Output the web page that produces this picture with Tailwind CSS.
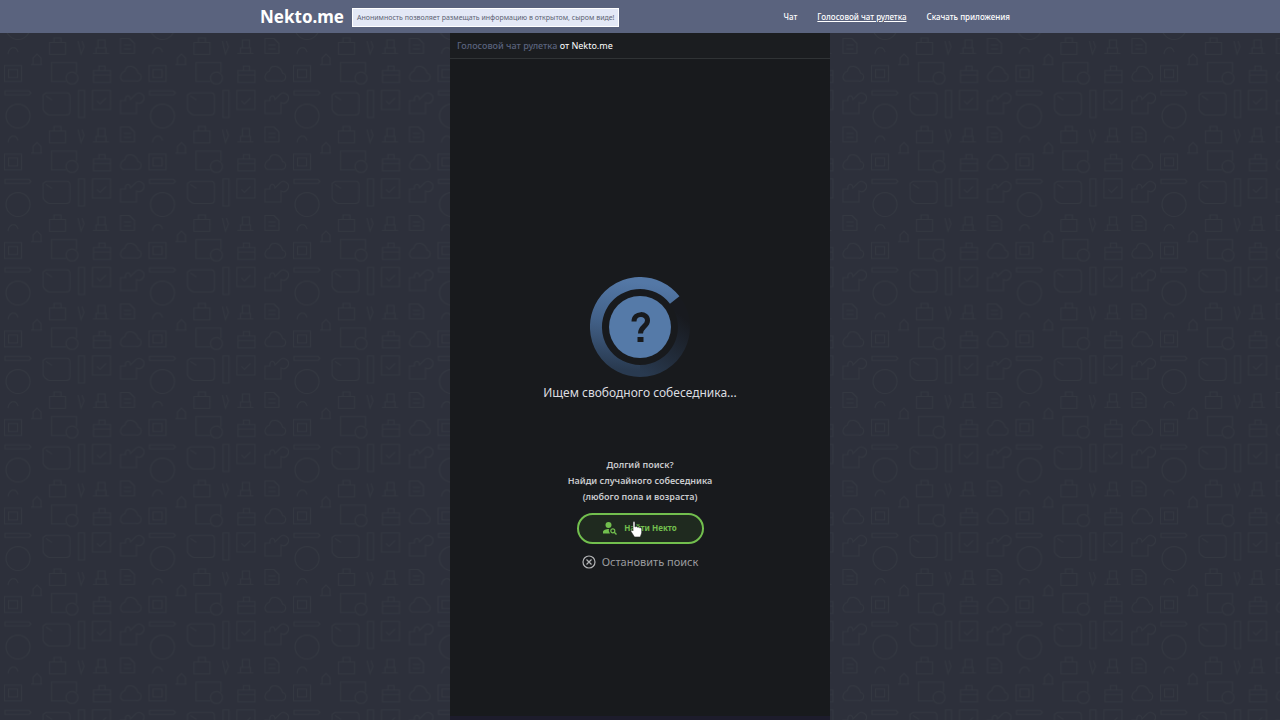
<!DOCTYPE html>
<html lang="ru">
<head>
  <meta charset="UTF-8" />
  <meta name="viewport" content="width=device-width, initial-scale=1.0" />
  <title>Голосовой чат рулетка</title>
  <script src="https://cdn.jsdelivr.net/npm/@tailwindcss/browser@4"></script>
</head>
<body class="relative flex min-h-screen flex-col bg-[#2d303b] font-['Noto_Sans',sans-serif] text-white">
  <!-- doodle wallpaper -->
  <svg class="absolute inset-0 h-full w-full" aria-hidden="true">
    <defs>
      <pattern id="doodles" x="0" y="33" width="144.500" height="88.500" patternUnits="userSpaceOnUse">
        <g fill="none" stroke="#343841" stroke-width="1">
          <path d="M8 21c1-7 8-9 10-2M5 58h24l2 2-2 2H5z" />
          <path d="M49.500 9.500h16v12h-16zM54 9V5h7v4M78 8l3 13 3-7-2-6" />
          <path d="M93 20.500h16M96 20v-5h10v5M98 15v-8h7v8" />
          <path d="M120.500 5.500h9l5 5v10h-14zM124 12h7M124 16h7" />
          <path d="M31 31.500h11M33 31v-6l4-4 4 4v6" />
          <path d="M4.500 32.500h17v16h-17zM8.500 36.500h9v8h-9z" />
          <path d="M66 48.500H51.500v-19h25v10" /><circle cx="72" cy="45" r="6" />
          <path d="M93.500 37.500h17v12h-17zM93 42h17M99 37v-4h6v4" />
          <path d="M123 48h13a4 4 0 0 0 2-8c-2-8-12-9-13-2-5 2-6 8-2 10z" />
          <path d="M46 60h21q3 0 3 4v14q0 4-4 4H49q-5-2-6-6V62zM46 63l6 4" />
          <path d="M78.500 57.500h6v27h-6z" />
          <path d="M92.500 57.500h18v19h-18zM97 68l3 3 6-6" />
          <path d="M120.500 80.500v-13h5c-1-6 5-6 5-1l5-5a5 5 0 1 1 1 8v11z" />
          <circle cx="18" cy="83" r="12" /><circle cx="18" cy="-5.500" r="12" />
        </g>
      </pattern>
    </defs>
    <rect width="100%" height="100%" fill="url(#doodles)" />
  </svg>

  <header class="relative bg-[#5a637e]">
    <div class="mx-auto flex h-[33px] max-w-[760px] items-center justify-between pr-[10px]">
      <div class="flex items-center gap-2">
        <a href="#" class="text-[17px] leading-[32px] font-bold">Nekto.me</a>
        <p class="mt-px h-[19px] border border-white bg-[#e3e8f6] px-[4px] text-[7px] leading-[17px] whitespace-nowrap text-[#5c6272]">Анонимность позволяет размещать информацию в открытом, сыром виде!</p>
      </div>
      <nav class="flex gap-5 text-[8px] font-medium whitespace-nowrap">
        <a href="#">Чат</a>
        <a href="#" class="underline">Голосовой чат рулетка</a>
        <a href="#">Скачать приложения</a>
      </nav>
    </div>
  </header>

  <main class="relative mx-auto flex w-full max-w-[380px] grow flex-col bg-[#181a1d]">
    <h1 class="border-b border-[#303335] bg-[#1b1d20] px-[7px] text-[9px] leading-[25px]"><a href="#" class="font-medium text-[#5a637e]">Голосовой чат рулетка</a> от Nekto.me</h1>

    <section class="flex grow flex-col items-center justify-center pt-[73px]">
      <svg class="h-[100px] w-[100px]" viewBox="0 0 100 100" aria-hidden="true">
        <defs>
          <linearGradient id="arc" x1="0.6" y1="0" x2="0.5" y2="1">
            <stop offset="0" stop-color="#5478a6" />
            <stop offset="0.45" stop-color="#43628a" />
            <stop offset="1" stop-color="#293a50" />
          </linearGradient>
          <linearGradient id="tail" x1="0" y1="1" x2="0.5" y2="0">
            <stop offset="0" stop-color="#293a50" />
            <stop offset="1" stop-color="#181a1f" />
          </linearGradient>
        </defs>
        <path d="M50 94A44 44 0 0 0 84.700 23" fill="none" stroke="url(#tail)" stroke-width="12" />
        <path d="M84.700 23A44 44 0 1 0 50 94" fill="none" stroke="url(#arc)" stroke-width="12" />
        <circle cx="50" cy="50" r="31" fill="#557aa8" />
        <path d="M44 44.500c0-9 13.500-9 13.500-1 0 6-7 6-7 13" fill="none" stroke="#181a1d" stroke-width="5" />
        <path d="M47.500 60h6v5h-6z" fill="#181a1d" />
      </svg>
      <p class="mt-[6px] text-[12px] leading-[20px] text-[#dcdde0]">Ищем свободного собеседника...</p>

      <p class="mt-[54px] text-center text-[9px] leading-[16px] font-semibold text-[#c9cacd]">Долгий поиск?<br />Найди случайного собеседника<br />(любого пола и возраста)</p>
      <div class="relative mt-[8px]">
        <button type="button" class="flex h-[31px] w-[127px] cursor-pointer items-center justify-center gap-[7px] rounded-full border-2 border-[#72bf4e] bg-[#1f2a1f] text-[8px] font-bold text-[#72bf4e]">
          <svg class="h-[14px] w-[14px]" viewBox="0 0 14 14" aria-hidden="true">
            <circle cx="5.500" cy="4" r="3" fill="#72bf4e" />
            <path d="M0 12.500v-1.500c0-2 3-3 6-3a4 4 0 0 0 1 4.500z" fill="#72bf4e" />
            <circle cx="9.800" cy="9.800" r="2" fill="none" stroke="#72bf4e" stroke-width="1.200" />
            <path d="M11.300 11.300l2.200 2.200" stroke="#72bf4e" stroke-width="1.300" />
          </svg>
          Найти Некто
        </button>
        <svg class="absolute top-[8px] left-[53px] h-[17px] w-[13px]" viewBox="0 0 13 17" aria-hidden="true">
          <path d="M3 1.500c0-1.300 2-1.300 2 0V6c1-.8 2-.5 2.300.2 1-.5 2 0 2.200.6 1-.4 2.200.2 2.200 1.300V12l-1.400 4H4.500L1 10.500c-.6-1 .8-1.800 1.500-1l.5.5z" fill="#fff" stroke="#222" stroke-width=".6" />
        </svg>
      </div>
      <button type="button" class="mt-[8px] flex cursor-pointer items-center gap-[6px] text-[11px] leading-[20px] text-[#9b9c9f]">
        <svg class="h-[14px] w-[14px]" viewBox="0 0 14 14" fill="none" stroke="#b4b5b7" stroke-width="1.200" aria-hidden="true">
          <circle cx="7" cy="7" r="6" />
          <path d="M4.500 4.500l5 5M9.500 4.500l-5 5" />
        </svg>
        Остановить поиск
      </button>
    </section>
    <div class="h-[4px] bg-[#1d1c2c]"></div>
  </main>
</body>
</html>
